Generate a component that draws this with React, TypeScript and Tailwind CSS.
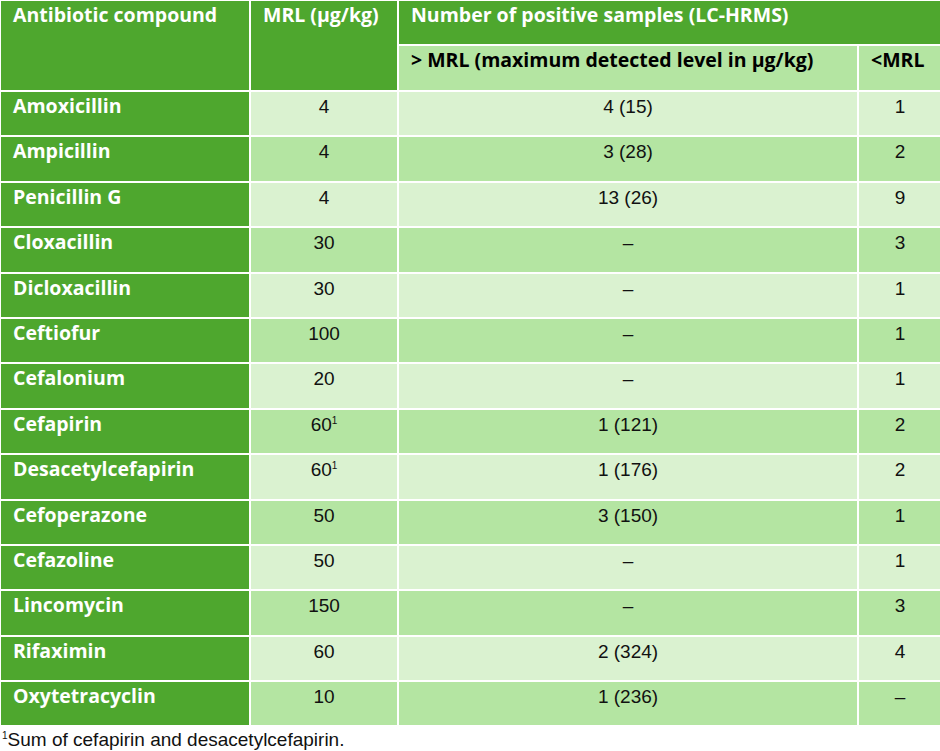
const rows: { name: string; mrl: string; sup?: boolean; above: string; below: string }[] = [
  { name: "Amoxicillin", mrl: "4", above: "4 (15)", below: "1" },
  { name: "Ampicillin", mrl: "4", above: "3 (28)", below: "2" },
  { name: "Penicillin G", mrl: "4", above: "13 (26)", below: "9" },
  { name: "Cloxacillin", mrl: "30", above: "–", below: "3" },
  { name: "Dicloxacillin", mrl: "30", above: "–", below: "1" },
  { name: "Ceftiofur", mrl: "100", above: "–", below: "1" },
  { name: "Cefalonium", mrl: "20", above: "–", below: "1" },
  { name: "Cefapirin", mrl: "60", sup: true, above: "1 (121)", below: "2" },
  { name: "Desacetylcefapirin", mrl: "60", sup: true, above: "1 (176)", below: "2" },
  { name: "Cefoperazone", mrl: "50", above: "3 (150)", below: "1" },
  { name: "Cefazoline", mrl: "50", above: "–", below: "1" },
  { name: "Lincomycin", mrl: "150", above: "–", below: "3" },
  { name: "Rifaximin", mrl: "60", above: "2 (324)", below: "4" },
  { name: "Oxytetracyclin", mrl: "10", above: "1 (236)", below: "–" },
];

const bold = "font-['Open_Sans',sans-serif] font-bold text-[19.5px] leading-[22px]";

export default function App() {
  return (
    <div className="w-[940px] h-[751px] bg-white overflow-hidden" style={{ fontFamily: '"Liberation Sans", Arial, sans-serif' }}>
      <table className="border-collapse table-fixed w-[942px] -ml-px -mt-px text-[19px] leading-[22px]">
        <colgroup>
          <col className="w-[250px]" />
          <col className="w-[148px]" />
          <col className="w-[460px]" />
          <col className="w-[84px]" />
        </colgroup>
        <thead>
          <tr className="h-[45px]">
            <th rowSpan={2} className={`${bold} bg-[#4ea72e] text-white text-left align-top pl-3 pt-[3px] border-2 border-white border-r border-r-dotted`}>
              Antibiotic compound
            </th>
            <th rowSpan={2} className={`${bold} bg-[#4ea72e] text-white text-left align-top pl-3 pt-[3px] border-2 border-white`}>
              MRL (µg/kg)
            </th>
            <th colSpan={2} className={`${bold} bg-[#4ea72e] text-white text-left align-top pl-3 pt-[3px] border-2 border-white`}>
              Number of positive samples (LC-HRMS)
            </th>
          </tr>
          <tr className="h-[46px]">
            <th className={`${bold} bg-[#b4e5a2] text-black text-left align-top pl-3 pt-[3px] border-2 border-white`}>
              &gt; MRL (maximum detected level in µg/kg)
            </th>
            <th className={`${bold} bg-[#b4e5a2] text-black text-left align-top pl-3 pt-[3px] border-2 border-white`}>
              &lt;MRL
            </th>
          </tr>
        </thead>
        <tbody>
          {rows.map((r, i) => {
            const bg = i % 2 === 0 ? "bg-[#daf2d0]" : "bg-[#b4e5a2]";
            return (
              <tr key={r.name} className="h-[45.4px]">
                <td className={`${bold} bg-[#4ea72e] text-white align-top pl-3 pt-[3px] border-2 border-white`}>{r.name}</td>
                <td className={`${bg} text-[#111] text-center align-top pt-[4px] border-2 border-white`}>
                  {r.mrl}
                  {r.sup && <span className="text-[10px] leading-none relative -top-[7px]">1</span>}
                </td>
                <td className={`${bg} text-[#111] text-center align-top pt-[4px] border-2 border-white`}>{r.above}</td>
                <td className={`${bg} text-[#111] text-center align-top pt-[4px] border-2 border-white`}>{r.below}</td>
              </tr>
            );
          })}
        </tbody>
      </table>
      <p className="pl-[2px] mt-[1px] text-[19px] leading-[24px] text-[#111]">
        <span className="text-[10px] leading-none relative -top-[7px]">1</span>Sum of cefapirin and desacetylcefapirin.
      </p>
    </div>
  );
}
